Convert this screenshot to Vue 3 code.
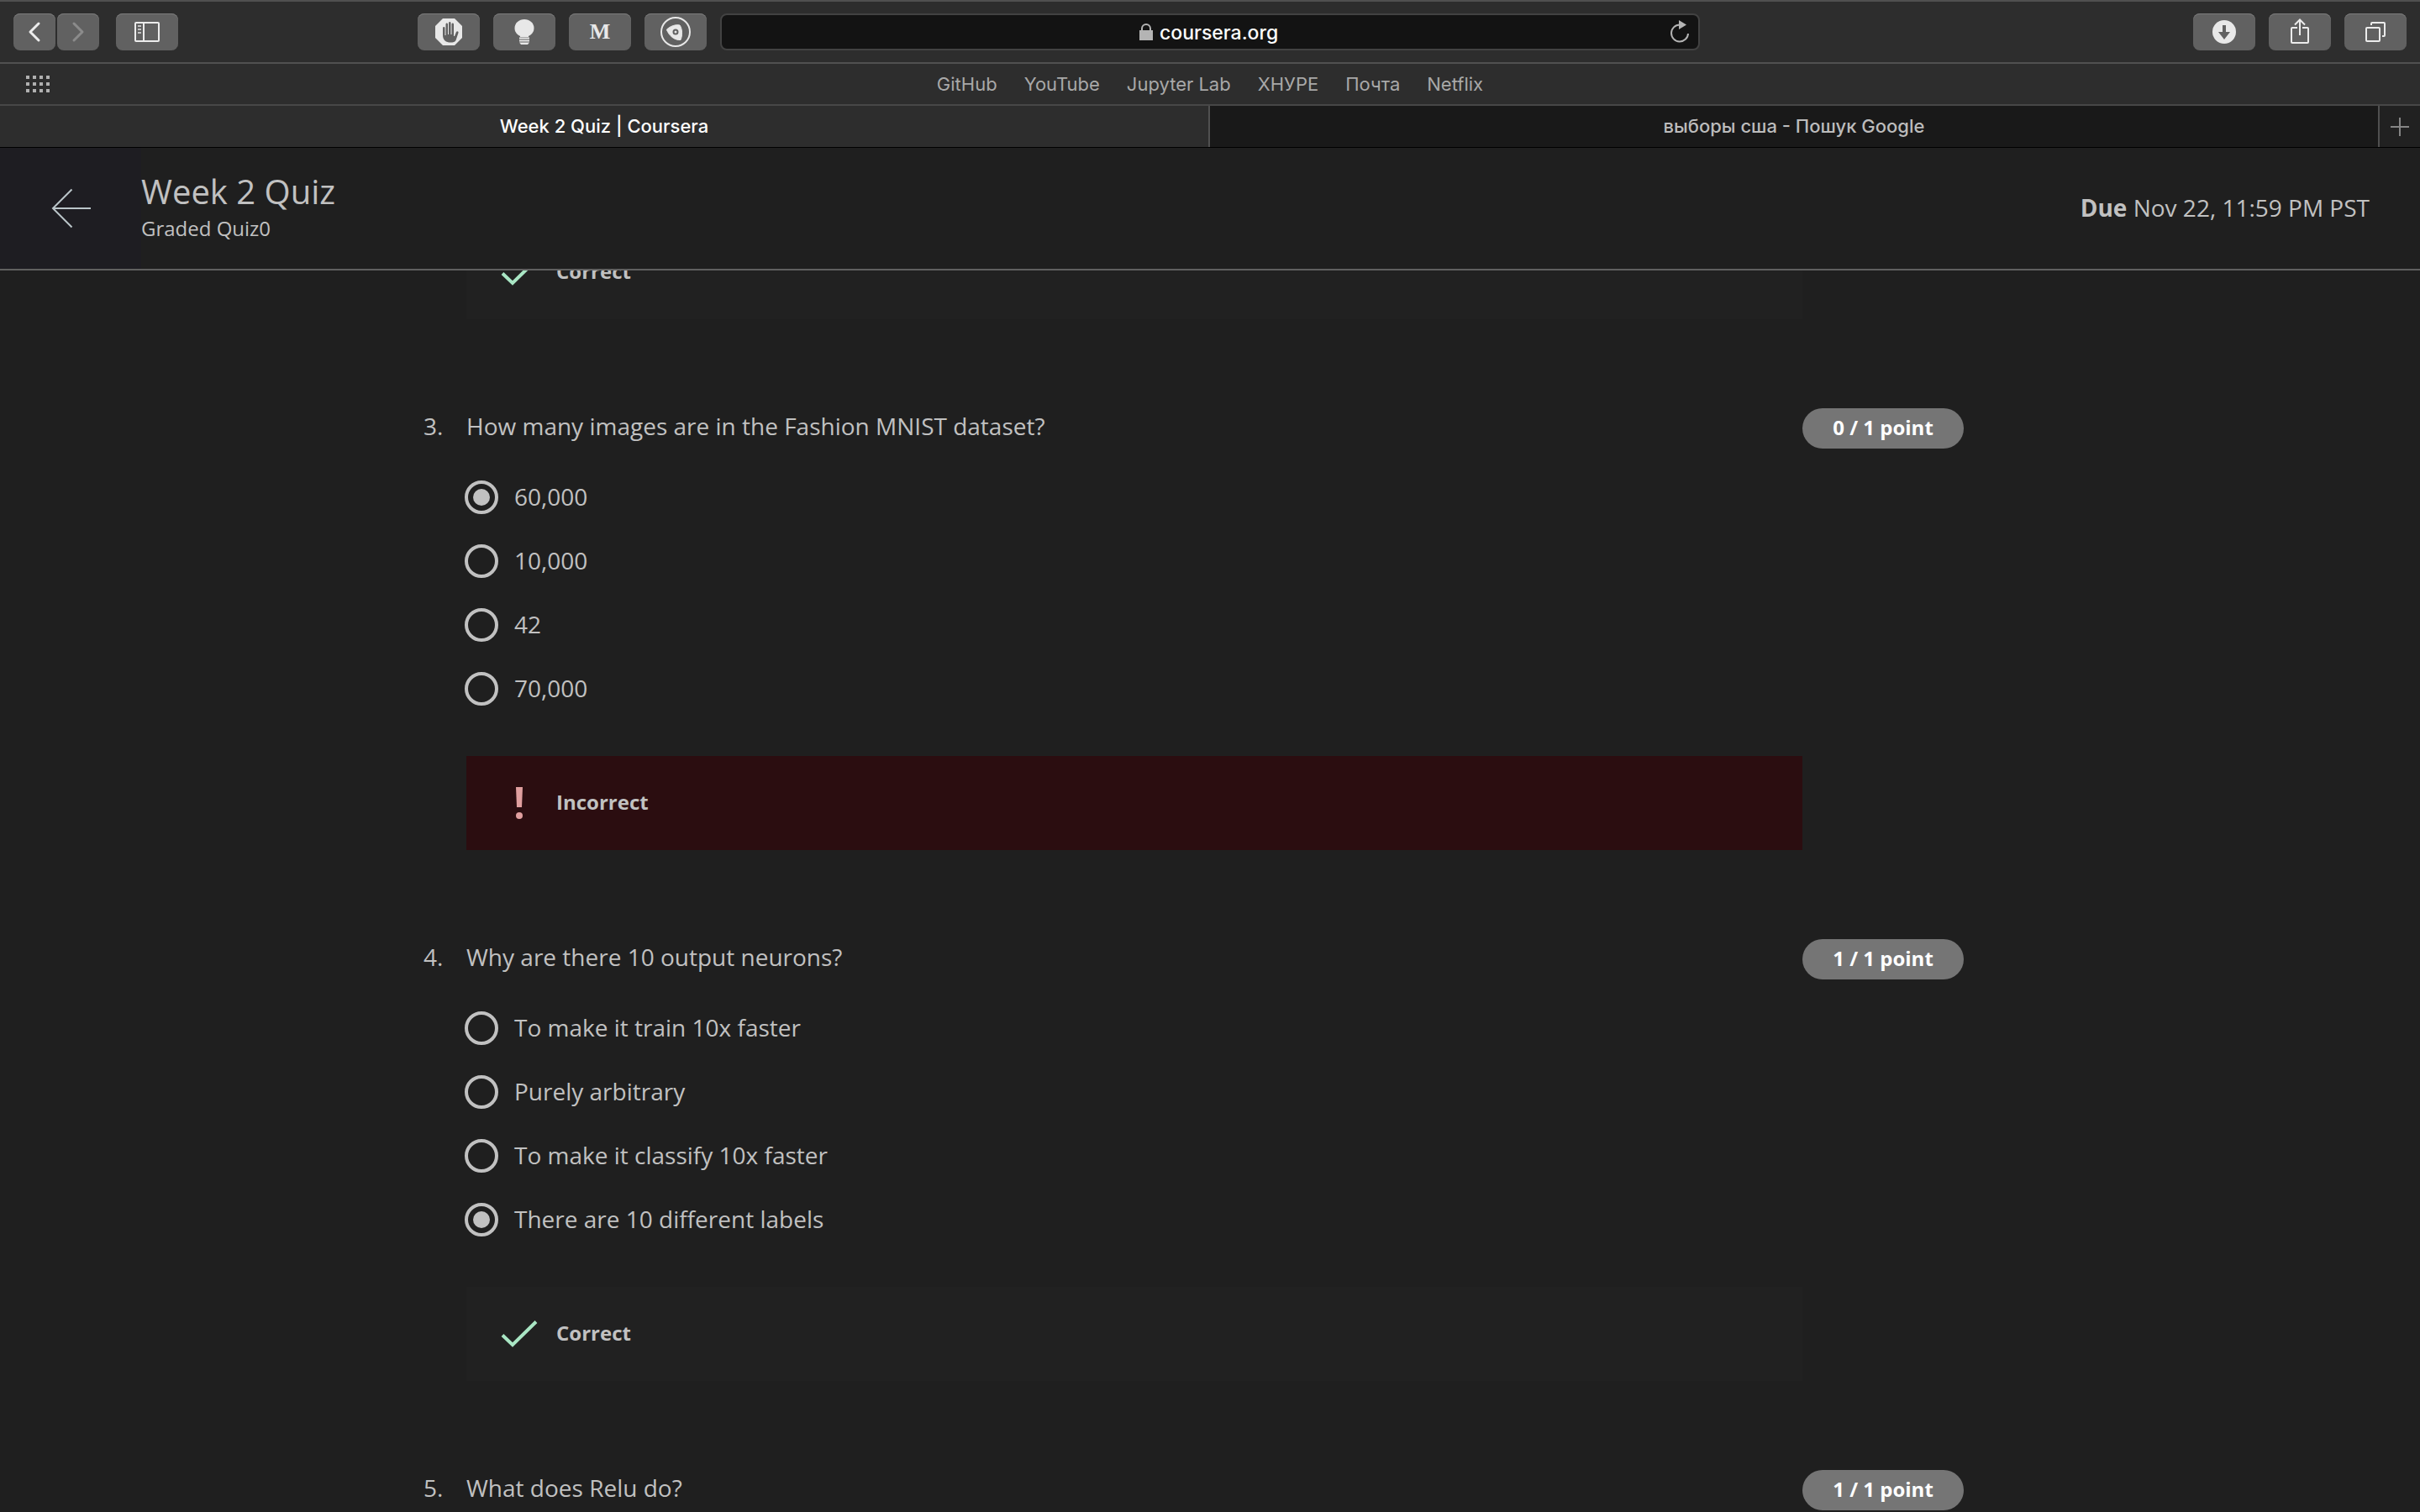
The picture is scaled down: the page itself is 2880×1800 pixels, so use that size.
<script setup>
import { reactive } from 'vue'

const bookmarks = ['GitHub', 'YouTube', 'Jupyter Lab', 'ХНУРЕ', 'Почта', 'Netflix']

const questions = reactive([
  {
    number: 3,
    text: 'How many images are in the Fashion MNIST dataset?',
    points: '0 / 1 point',
    options: ['60,000', '10,000', '42', '70,000'],
    answer: '60,000',
    correct: false
  },
  {
    number: 4,
    text: 'Why are there 10 output neurons?',
    points: '1 / 1 point',
    options: [
      'To make it train 10x faster',
      'Purely arbitrary',
      'To make it classify 10x faster',
      'There are 10 different labels'
    ],
    answer: 'There are 10 different labels',
    correct: true
  },
  {
    number: 5,
    text: 'What does Relu do?',
    points: '1 / 1 point',
    options: [],
    answer: '',
    correct: true
  }
])
</script>

<template>
  <div class="window">
    <div class="toolbar">
      <div class="history">
        <button class="tool narrow" type="button" aria-label="Back">
          <svg width="50" height="44" viewBox="0 0 50 44"><path d="M30 12 20 22l10 10" fill="none" stroke="#ececec" stroke-width="3" stroke-linecap="round" stroke-linejoin="round" /></svg>
        </button>
        <button class="tool narrow" type="button" aria-label="Forward" disabled>
          <svg width="50" height="44" viewBox="0 0 50 44"><path d="M20 12 30 22 20 32" fill="none" stroke="#8b8b8b" stroke-width="3" stroke-linecap="round" stroke-linejoin="round" /></svg>
        </button>
      </div>
      <button class="tool" type="button" aria-label="Sidebar">
        <svg width="74" height="44" viewBox="0 0 74 44" fill="none" stroke="#ececec" stroke-width="2">
          <rect x="23" y="11" width="28" height="22" rx="1" />
          <path d="M33 11v22" />
          <path d="M26 15h4M26 19h4M26 23h4" stroke="#c4c4c4" />
        </svg>
      </button>
      <div class="spacer"></div>
      <div class="extensions">
        <button class="tool" type="button" aria-label="Ad blocker">
          <svg width="74" height="44" viewBox="0 0 74 44">
            <path d="M30 6h14l9 9v14l-9 9H30l-9-9V15z" fill="#e8e8e8" />
            <path d="M30 17.500c0-2 2.500-2 2.500 0V26h1V13c0-2 2.500-2 2.500 0v12h1V11.500c0-2 2.500-2 2.500 0V25h1V13c0-2 2.500-2 2.500 0v14h1l2-5c.8-1.600 3-.8 2.500 1l-3 9c-1 2-3 2.500-6.500 2.500-5 0-9-2.500-9-8.500z" fill="#616161" />
          </svg>
        </button>
        <button class="tool" type="button" aria-label="Lights off">
          <svg width="74" height="44" viewBox="0 0 74 44">
            <ellipse cx="37" cy="17.500" rx="11.500" ry="10.500" fill="#e8e8e8" />
            <path d="M32 25h10v3H32z" fill="#e8e8e8" />
            <path d="M31 29.500h12M31 32.500h12" stroke="#e8e8e8" stroke-width="1.800" />
            <path d="M31 34.500h12l-2 2.500h-8z" fill="#e8e8e8" />
          </svg>
        </button>
        <button class="tool letter" type="button" aria-label="Mail">M</button>
        <button class="tool" type="button" aria-label="Privacy">
          <svg width="74" height="44" viewBox="0 0 74 44">
            <circle cx="37" cy="22" r="17" fill="none" stroke="#e8e8e8" stroke-width="2" />
            <path d="M26.500 19C31 15 37 12.800 42 14c3 4 3.400 12 1 17.500-6 .5-11.500-3-15-9-.8-1.500-1.800-2.800-1.500-3.500z" fill="#e8e8e8" stroke="#e8e8e8" stroke-linejoin="round" />
            <circle cx="37" cy="22" r="2.500" fill="#e8e8e8" stroke="#616161" stroke-width="2" />
          </svg>
        </button>
      </div>
      <div class="address">
        <div class="site">
          <svg width="16" height="22" viewBox="0 0 16 22">
            <path d="M3 10V7a5 5 0 0 1 10 0v3" fill="none" stroke="#b4b4b4" stroke-width="2" />
            <path d="M0 9h16v12H0z" fill="#b4b4b4" />
          </svg>
          <input type="text" value="coursera.org" aria-label="Address" />
        </div>
        <button class="reload" type="button" aria-label="Reload">
          <svg width="24" height="28" viewBox="0 0 24 28">
            <path d="M22 16a10 10 0 1 1-10-10.500" fill="none" stroke="#b4b4b4" stroke-width="2" />
            <path d="M11 0l9 5.500-9 5.500z" fill="#b4b4b4" />
          </svg>
        </button>
      </div>
      <div class="spacer wide"></div>
      <div class="extensions">
        <button class="tool" type="button" aria-label="Downloads">
          <svg width="74" height="44" viewBox="0 0 74 44">
            <circle cx="37" cy="22" r="14" fill="#e8e8e8" />
            <path d="M35 14h4v8h5l-7 9-7-9h5z" fill="#616161" />
          </svg>
        </button>
        <button class="tool" type="button" aria-label="Share">
          <svg width="74" height="44" viewBox="0 0 74 44" fill="none" stroke="#ececec" stroke-width="2">
            <path d="M34 17h-6q-1 0-1 1v16q0 1 1 1h18q1 0 1-1V18q0-1-1-1h-6" />
            <path d="M37 26V8M31 13.500 37 7.500l6 6" />
          </svg>
        </button>
        <button class="tool" type="button" aria-label="Show tabs">
          <svg width="74" height="44" viewBox="0 0 74 44" fill="none" stroke="#ececec" stroke-width="2">
            <rect x="26" y="17" width="16" height="16" rx="1" />
            <path d="M32 14v-2q0-1 1-1h14q1 0 1 1v14q0 1-1 1h-2" />
          </svg>
        </button>
      </div>
    </div>

    <nav class="bookmarks">
      <button class="grid-button" type="button" aria-label="Favourites">
        <svg width="29" height="21" viewBox="0 0 29 21">
          <path d="M0 2h28M0 10h28M0 18h28" stroke="#b0b0b0" stroke-width="4" stroke-dasharray="4 4" />
        </svg>
      </button>
      <a v-for="name in bookmarks" :key="name" href="#">{{ name }}</a>
    </nav>

    <div class="tabs">
      <a class="tab active" href="#">Week 2 Quiz | Coursera</a>
      <a class="tab" href="#">выборы сша - Пошук Google</a>
      <button class="new-tab" type="button" aria-label="New tab">
        <svg width="22" height="22" viewBox="0 0 22 22"><path d="M11 0v22M0 11h22" stroke="#858585" stroke-width="2" /></svg>
      </button>
    </div>

    <header class="quiz-header">
      <button class="leave" type="button" aria-label="Leave quiz">
        <svg width="48" height="48" viewBox="0 0 48 48"><path d="M48 24H3M25.500 1.500 3 24l22.500 22.500" fill="none" stroke="#bac5c9" stroke-width="2" /></svg>
      </button>
      <div class="heading">
        <h1>Week 2 Quiz</h1>
        <p>Graded Quiz0</p>
      </div>
      <p class="due"><strong>Due</strong> Nov 22, 11:59 PM PST</p>
    </header>

    <main class="page">
      <div class="quiz">
        <div class="feedback">
          <svg width="44" height="44" viewBox="0 0 44 44"><path d="M2 23.500 14 35 42 7.500" fill="none" stroke="#a9e6c4" stroke-width="4" /></svg>
          <span>Correct</span>
        </div>
        <section v-for="q in questions" :key="q.number" class="question">
          <div class="number">{{ q.number }}.</div>
          <div class="prompt">{{ q.text }}</div>
          <div class="points">{{ q.points }}</div>
          <div v-if="q.options.length" class="options">
            <label v-for="option in q.options" :key="option">
              <input v-model="q.answer" type="radio" :name="'question-' + q.number" :value="option" />
              <span>{{ option }}</span>
            </label>
          </div>
          <div v-if="q.options.length" class="feedback" :class="{ wrong: !q.correct }">
            <svg v-if="q.correct" width="44" height="44" viewBox="0 0 44 44"><path d="M2 23.500 14 35 42 7.500" fill="none" stroke="#a9e6c4" stroke-width="4" /></svg>
            <svg v-else width="44" height="44" viewBox="0 0 44 44">
              <path d="M18 3h8l-1 24h-6z" fill="#e09f9f" />
              <circle cx="22" cy="37" r="4" fill="#e09f9f" />
            </svg>
            <span>{{ q.correct ? 'Correct' : 'Incorrect' }}</span>
          </div>
        </section>
      </div>
    </main>
  </div>
</template>

<style>
body {
  margin: 0;
  background: #1f1f1f;
}
</style>

<style scoped>
* {
  box-sizing: border-box;
}

button {
  padding: 0;
  border: 0;
  background: none;
}

svg {
  display: block;
  flex: none;
}

a {
  text-decoration: none;
}

h1,
p {
  margin: 0;
}

.window {
  display: flex;
  flex-direction: column;
  height: 100vh;
  overflow: hidden;
  background: #1f1f1f;
  color: #c1c1c1;
  font-family: "Open Sans", "Noto Sans", sans-serif;
}

.toolbar,
.bookmarks,
.tabs {
  flex: none;
  font-family: Inter, Roboto, sans-serif;
}

.toolbar {
  display: flex;
  align-items: center;
  height: 76px;
  padding: 0 16px;
  border-top: 2px solid #505050;
  border-bottom: 2px solid #505050;
  background: #2d2d2d;
}

.history {
  display: flex;
  gap: 2px;
  margin-right: 20px;
}

.extensions {
  display: flex;
  gap: 16px;
}

.tool {
  width: 74px;
  height: 44px;
  border-radius: 8px;
  background: #616161;
  box-shadow: inset 0 1px #7c7c7c;
}

.narrow {
  width: 50px;
}

.letter {
  color: #e8e8e8;
  font: bold 26px/44px "Liberation Serif", serif;
}

.spacer {
  flex: 285 1 0;
}

.wide {
  flex-grow: 587;
}

.address {
  display: flex;
  align-items: center;
  flex: 0 1 1166px;
  height: 44px;
  margin-left: 16px;
  padding-left: 34px;
  border: 2px solid #424242;
  border-radius: 8px;
  background: #131313;
}

.site {
  display: flex;
  align-items: center;
  justify-content: center;
  flex: 1;
  gap: 8px;
}

.site input {
  width: 144px;
  padding: 2px 0 0;
  border: 0;
  background: none;
  color: #fff;
  font: 500 23px/36px Inter, Roboto, sans-serif;
}

.reload {
  margin-right: 10px;
}

.bookmarks {
  display: flex;
  align-items: center;
  justify-content: center;
  gap: 32px;
  position: relative;
  height: 50px;
  border-bottom: 2px solid #474747;
  background: #2d2d2d;
}

.bookmarks a {
  color: #a8a8a8;
  font-size: 22px;
  line-height: 28px;
}

.grid-button {
  position: absolute;
  left: 31px;
}

.tabs {
  display: flex;
  height: 50px;
  border-bottom: 1px solid #000;
  background: #191919;
}

.tab {
  display: flex;
  align-items: center;
  justify-content: center;
  flex: 1390 1 0;
  padding-bottom: 2px;
  border-right: 2px solid #505050;
  color: #bcbcbc;
  font-size: 22px;
  font-weight: 500;
}

.active {
  flex-grow: 1438;
  background: #2d2d2d;
  color: #fff;
}

.new-tab {
  display: grid;
  place-items: center;
  width: 48px;
  background: #212121;
}

.quiz-header {
  display: flex;
  align-items: center;
  flex: none;
  position: relative;
  z-index: 1;
  height: 146px;
  padding-right: 60px;
  border-bottom: 2px solid #606060;
  background: #1f1f1f;
}

.leave {
  display: grid;
  place-items: center;
  align-self: stretch;
  width: 168px;
  background: #1e1d22;
}

.heading {
  flex: 1;
  padding-bottom: 8px;
}

.heading h1 {
  font-size: 40px;
  font-weight: 400;
  line-height: 56px;
}

.heading p {
  font-size: 24px;
  line-height: 32px;
}

.due {
  padding-bottom: 2px;
  font-size: 28px;
  line-height: 40px;
}

.page {
  display: grid;
  grid-template-columns: minmax(24px, 504fr) minmax(0, 1833px) minmax(24px, 543fr);
  margin-top: -54px;
}

.quiz {
  grid-column: 2;
}

.question {
  display: grid;
  grid-template-columns: 51px 1fr 192px;
  margin-top: 106px;
  font-size: 28px;
  line-height: 42px;
}

.points {
  height: 48px;
  border-radius: 24px;
  background: #757575;
  color: #fff;
  font-size: 24px;
  font-weight: 700;
  line-height: 46px;
  text-align: center;
}

.options {
  display: flex;
  flex-direction: column;
  gap: 36px;
  grid-column: 2;
  margin: 38px 0 60px;
  line-height: 38px;
}

.options label {
  display: flex;
  align-items: center;
  gap: 19px;
}

.options span,
.feedback span {
  padding-bottom: 2px;
}

.options input {
  appearance: none;
  width: 40px;
  height: 40px;
  margin: 0 0 0 -2px;
  padding: 6px;
  border: 4px solid #c1c1c1;
  border-radius: 50%;
}

.options input:checked {
  background: #c1c1c1 content-box;
}

.feedback {
  display: flex;
  align-items: center;
  gap: 22px;
  height: 112px;
  padding: 0 41px;
  background: #212121;
  font-size: 24px;
  font-weight: 700;
  line-height: 36px;
}

.quiz > .feedback {
  margin: 0 192px 0 51px;
}

.question .feedback {
  grid-column: 2;
}

.wrong {
  background: #2b0d10;
}
</style>
